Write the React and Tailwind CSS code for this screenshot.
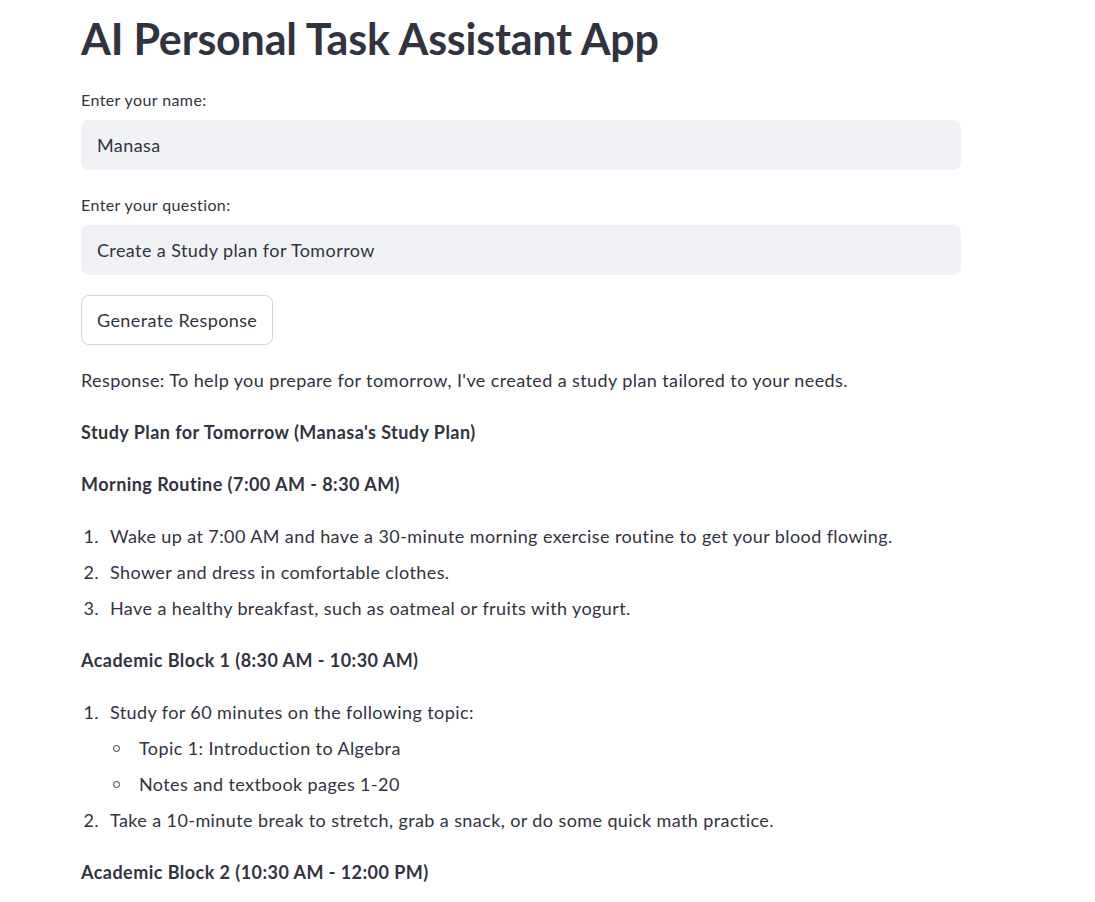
const morning = [
  'Wake up at 7:00 AM and have a 30-minute morning exercise routine to get your blood flowing.',
  'Shower and dress in comfortable clothes.',
  'Have a healthy breakfast, such as oatmeal or fruits with yogurt.',
]

function Field({ label, value }) {
  return (
    <div className="flex flex-col">
      <label className="flex h-[26px] items-center text-[16px] leading-none tracking-[0.4px]">{label}</label>
      <div className="mt-[7px] flex h-[50px] w-full items-center rounded-[8px] bg-[#f0f2f6] px-4 text-[18px] tracking-[0.4px]">
        {value}
      </div>
    </div>
  )
}

function Item({ n, children }) {
  return (
    <div className="flex h-[36px] items-center">
      <span className="w-[18px] text-right">{n}.</span>
      <span className="ml-[11px]">{children}</span>
    </div>
  )
}

function SubItem({ children }) {
  return (
    <div className="flex h-[36px] items-center">
      <span className="ml-[32px] h-[7px] w-[7px] rounded-full border-[1.5px] border-[#31333f]" />
      <span className="ml-[19px]">{children}</span>
    </div>
  )
}

function Heading({ children }) {
  return <div className="flex h-[36px] items-center font-bold tracking-[0.45px]">{children}</div>
}

export default function App() {
  return (
    <div
      className="min-h-screen w-full bg-white text-[#31333f]"
      style={{ fontFamily: 'Lato, "Noto Sans", sans-serif' }}
    >
      <div className="ml-[81px] w-[880px] pt-[13px]">
        <h1 className="flex h-[50px] items-center text-[43px] font-bold leading-none tracking-[-0.2px]">
          AI Personal Task Assistant App
        </h1>

        <div className="mt-[24px]">
          <Field label="Enter your name:" value="Manasa" />
        </div>
        <div className="mt-[22px]">
          <Field label="Enter your question:" value="Create a Study plan for Tomorrow" />
        </div>

        <button
          type="button"
          className="mt-[20px] flex h-[50px] w-[192px] items-center whitespace-nowrap rounded-[8px] border border-[#d6d6d9] bg-white px-[15px] text-[18px] tracking-[0.4px]"
        >
          Generate Response
        </button>

        <div className="mt-[17px] text-[18px] tracking-[0.4px]">
          <div className="flex h-[36px] items-center">
            Response: To help you prepare for tomorrow, I've created a study plan tailored to your needs.
          </div>
          <div className="mt-[16px]">
            <Heading>Study Plan for Tomorrow (Manasa's Study Plan)</Heading>
          </div>
          <div className="mt-[16px]">
            <Heading>Morning Routine (7:00 AM - 8:30 AM)</Heading>
          </div>
          <div className="mt-[16px]">
            {morning.map((text, i) => (
              <Item key={i} n={i + 1}>
                {text}
              </Item>
            ))}
          </div>
          <div className="mt-[16px]">
            <Heading>Academic Block 1 (8:30 AM - 10:30 AM)</Heading>
          </div>
          <div className="mt-[16px]">
            <Item n={1}>Study for 60 minutes on the following topic:</Item>
            <SubItem>Topic 1: Introduction to Algebra</SubItem>
            <SubItem>Notes and textbook pages 1-20</SubItem>
            <Item n={2}>Take a 10-minute break to stretch, grab a snack, or do some quick math practice.</Item>
          </div>
          <div className="mt-[16px]">
            <Heading>Academic Block 2 (10:30 AM - 12:00 PM)</Heading>
          </div>
        </div>
      </div>
    </div>
  )
}
